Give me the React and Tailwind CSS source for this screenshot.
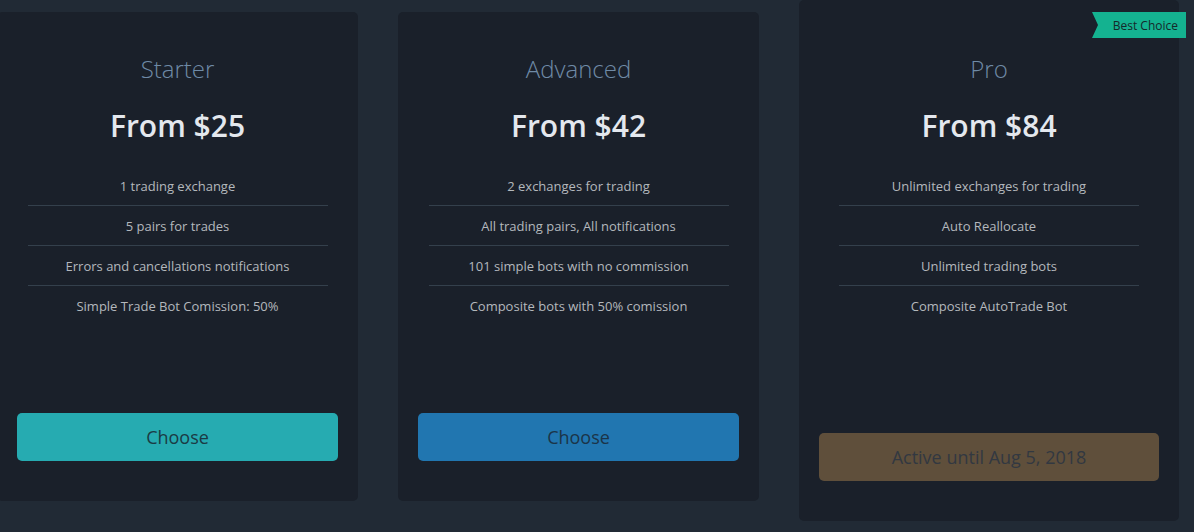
import React from 'react';

const PLANS = [
  {
    name: 'Starter',
    price: 'From $25',
    features: ['1 trading exchange', '5 pairs for trades', 'Errors and cancellations notifications', 'Simple Trade Bot Comission: 50%'],
    button: 'Choose',
    btnClass: 'bg-[#26abb1] text-[#1b3a44]',
  },
  {
    name: 'Advanced',
    price: 'From $42',
    features: ['2 exchanges for trading', 'All trading pairs, All notifications', '101 simple bots with no commission', 'Composite bots with 50% comission'],
    button: 'Choose',
    btnClass: 'bg-[#2176b0] text-[#1b3448]',
  },
];

function Features({ items }) {
  return (
    <ul className="mt-[22px] w-[300px] mx-auto">
      {items.map((f, i) => (
        <li
          key={f}
          className={`h-[40px] pt-[2px] flex items-center justify-center text-[13px] text-[#b4b8bd] ${i < items.length - 1 ? 'border-b border-[#34404c]' : ''}`}
        >
          {f}
        </li>
      ))}
    </ul>
  );
}

function Card({ plan }) {
  return (
    <div className="w-[361px] h-[489px] shrink-0 bg-[#1a202a] rounded-[5px] flex flex-col px-[20px] pt-[41px] pb-[40px]">
      <h2 className="text-center text-[24px] leading-[32px] font-light text-[#6f8aa6]">{plan.name}</h2>
      <div className="mt-[23px] text-center text-[30px] leading-[36px] font-semibold text-[#e4e8ee]">{plan.price}</div>
      <Features items={plan.features} />
      <button className={`mt-auto h-[48px] w-full rounded-[5px] text-[18px] ${plan.btnClass}`}>{plan.button}</button>
    </div>
  );
}

export default function App() {
  return (
    <div className="min-h-[532px] bg-[#212a35] overflow-hidden" style={{ fontFamily: '"Open Sans", "Noto Sans", sans-serif' }}>
      <div className="flex items-start gap-[40px] -ml-[3px] pt-[12px]">
        {PLANS.map(p => (
          <Card key={p.name} plan={p} />
        ))}

        {/* Pro card */}
        <div className="relative w-[380px] h-[521px] -mt-[12px] shrink-0 bg-[#1a202a] rounded-[5px] flex flex-col px-[20px] pt-[53px] pb-[40px]">
          <div className="absolute top-[12px] -right-[7px] h-[26px] w-[94px] bg-[#14b290] flex items-center justify-end pr-[8px] pt-[1px] text-[12px] text-[#16282b] [clip-path:polygon(0_0,100%_0,100%_100%,0_100%,6px_50%)]">
            Best Choice
          </div>
          <h2 className="text-center text-[24px] leading-[32px] font-light text-[#6f8aa6]">Pro</h2>
          <div className="mt-[23px] text-center text-[30px] leading-[36px] font-semibold text-[#e4e8ee]">From $84</div>
          <Features items={['Unlimited exchanges for trading', 'Auto Reallocate', 'Unlimited trading bots', 'Composite AutoTrade Bot']} />
          <button className="mt-auto h-[48px] w-full rounded-[5px] text-[18px] bg-[#5f4f3b] text-[#323841]">Active until Aug 5, 2018</button>
        </div>
      </div>
    </div>
  );
}
